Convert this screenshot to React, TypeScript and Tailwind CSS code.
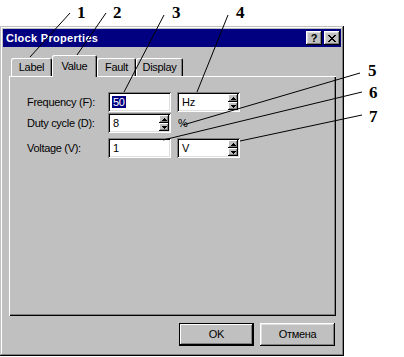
import React from "react";

function TitleButton({ children }: { children: React.ReactNode }) {
  return (
    <div className="flex h-[14px] w-[16px] items-center justify-center bg-[#c0c0c0] shadow-[inset_-1px_-1px_#000000,inset_1px_1px_#ffffff,inset_-2px_-2px_#808080,inset_2px_2px_#dfdfdf]">
      {children}
    </div>
  );
}

function Spinner() {
  return (
    <div className="flex h-full w-[10px] flex-col">
      <div className="flex h-1/2 items-center justify-center bg-[#c0c0c0] shadow-[inset_-1px_-1px_#000000,inset_1px_1px_#ffffff,inset_-2px_-2px_#808080]">
        <svg width="5" height="3" viewBox="0 0 5 3" shapeRendering="crispEdges">
          <path d="M2 0h1v1h1v1h1v1H0V2h1V1h1z" fill="#000" />
        </svg>
      </div>
      <div className="flex h-1/2 items-center justify-center bg-[#c0c0c0] shadow-[inset_-1px_-1px_#000000,inset_1px_1px_#ffffff,inset_-2px_-2px_#808080]">
        <svg width="5" height="3" viewBox="0 0 5 3" shapeRendering="crispEdges">
          <path d="M0 0h5v1H4v1H3v1H2V2H1V1H0z" fill="#000" />
        </svg>
      </div>
    </div>
  );
}

function Field({
  value,
  spin,
  selected,
}: {
  value: string;
  spin?: boolean;
  selected?: boolean;
}) {
  return (
    <div className="flex h-[20px] w-[63px] bg-white p-[2px] shadow-[inset_1px_1px_#808080,inset_-1px_-1px_#ffffff,inset_2px_2px_#000000,inset_-2px_-2px_#dfdfdf]">
      <div className="flex flex-1 items-center pl-[2px]">
        {selected ? (
          <span className="bg-[#000080] px-[1px] leading-[12px] text-white">{value}</span>
        ) : (
          <span className="px-[1px]">{value}</span>
        )}
      </div>
      {spin && <Spinner />}
    </div>
  );
}

function Tab({ label, active, className }: { label: string; active?: boolean; className: string }) {
  if (active) {
    return (
      <div
        className={`relative top-[1px] z-10 flex h-[22px] items-start justify-center rounded-t-[2px] bg-[#c0c0c0] pt-[3px] shadow-[inset_1px_1px_#ffffff,inset_-1px_0_#000000,inset_-2px_0_#808080] ${className}`}
      >
        {label}
      </div>
    );
  }
  return (
    <div
      className={`flex h-[18px] items-center justify-center rounded-t-[2px] bg-[#c0c0c0] shadow-[inset_1px_1px_#ffffff,inset_-1px_0_#000000,inset_-2px_0_#808080] ${className}`}
    >
      {label}
    </div>
  );
}

export default function App() {
  return (
    <main className="relative h-[357px] w-[404px] overflow-hidden bg-white pt-[26px] font-['Liberation_Sans',Arial,sans-serif] text-[11px] tracking-[-0.3px] text-black">
      {/* Dialog window */}
      <div className="flex h-[330px] w-[344px] flex-col bg-[#c0c0c0] p-[3px] shadow-[inset_-1px_-1px_#000000,inset_1px_1px_#c0c0c0,inset_-2px_-2px_#808080,inset_2px_2px_#ffffff]">
        {/* Title bar */}
        <div className="flex h-[18px] items-center justify-between bg-[#000080] pl-[3px] pr-[1px]">
          <span className="text-[11px] font-bold tracking-[0.3px] text-white">Clock Properties</span>
          <div className="flex gap-[2px]">
            <TitleButton>
              <span className="text-[11px] leading-none font-bold">?</span>
            </TitleButton>
            <TitleButton>
              <svg width="8" height="7" viewBox="0 0 8 7" shapeRendering="crispEdges">
                <path
                  d="M0 0h2v1h1v1h2V1h1V0h2v1H7v1H6v1H5v1h1v1h1v1h1v1H6V6H5V5H3v1H2v1H0V6h1V5h1V4h1V3H2V2H1V1H0z"
                  fill="#000"
                />
              </svg>
            </TitleButton>
          </div>
        </div>

        {/* Body */}
        <div className="flex flex-1 flex-col pl-[6px] pr-[5px] pt-[8px]">
          {/* Tabs */}
          <div className="flex h-[21px] items-end pl-[2px]">
            <Tab label="Label" className="w-[41px]" />
            <Tab label="Value" active className="w-[45px]" />
            <Tab label="Fault" className="w-[39px]" />
            <Tab label="Display" className="w-[47px]" />
          </div>

          {/* Tab panel */}
          <div className="flex h-[240px] flex-col bg-[#c0c0c0] pl-[18px] pt-[16px] shadow-[inset_1px_1px_#ffffff,inset_-1px_-1px_#000000,inset_-2px_-2px_#808080]">
            <div className="flex h-[20px] items-center">
              <span className="w-[81px]">Frequency (F):</span>
              <Field value="50" selected />
              <div className="ml-[6px]">
                <Field value="Hz" spin />
              </div>
            </div>
            <div className="mt-[1px] flex h-[20px] items-center">
              <span className="w-[81px]">Duty cycle (D):</span>
              <Field value="8" spin />
              <span className="ml-[7px]">%</span>
            </div>
            <div className="mt-[5px] flex h-[20px] items-center">
              <span className="w-[81px]">Voltage (V):</span>
              <Field value="1" />
              <div className="ml-[6px]">
                <Field value="V" spin />
              </div>
            </div>
          </div>

          {/* Buttons */}
          <div className="mt-[7px] flex justify-end gap-[6px] pr-[1px]">
            <button className="flex h-[23px] w-[75px] items-center justify-center border border-black bg-[#c0c0c0] shadow-[inset_-1px_-1px_#000000,inset_1px_1px_#ffffff,inset_-2px_-2px_#808080]">
              OK
            </button>
            <button className="flex h-[23px] w-[75px] items-center justify-center bg-[#c0c0c0] shadow-[inset_-1px_-1px_#000000,inset_1px_1px_#ffffff,inset_-2px_-2px_#808080,inset_2px_2px_#dfdfdf]">
              Отмена
            </button>
          </div>
        </div>
      </div>

      {/* Callouts */}
      <svg
        className="pointer-events-none absolute inset-0"
        width="404"
        height="357"
        viewBox="0 0 404 357"
      >
        <g stroke="#000" strokeWidth="1" fill="none">
          <path d="M70 13 L30 57" />
          <path d="M106 13 L77 55" />
          <path d="M164 15 L124 92" />
          <path d="M228 15 L197 92" />
          <path d="M360 73 L183 125" />
          <path d="M362 92 L163 140" />
          <path d="M362 115 L240 141" />
        </g>
        <g className="font-['Liberation_Serif',serif] text-[17px] font-bold" fill="#000">
          <text x="77" y="18">1</text>
          <text x="113" y="18">2</text>
          <text x="172" y="18">3</text>
          <text x="236" y="18">4</text>
          <text x="368" y="76">5</text>
          <text x="369" y="98">6</text>
          <text x="369" y="122">7</text>
        </g>
      </svg>
    </main>
  );
}
